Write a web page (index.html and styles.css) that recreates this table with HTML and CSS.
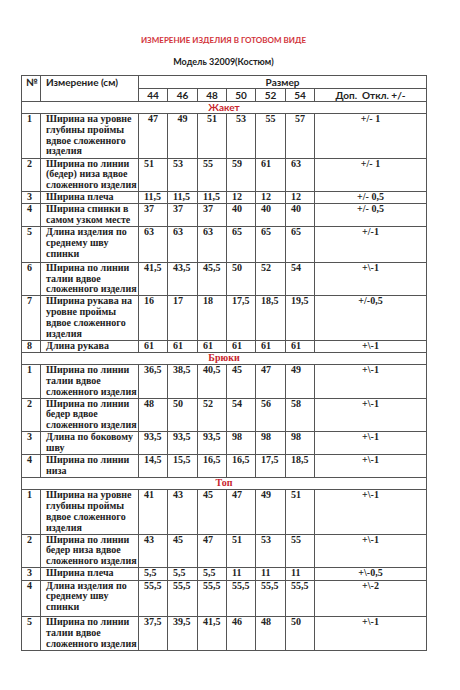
FILE: index.html
```html
<!DOCTYPE html>
<html>
<head>
<meta charset="utf-8">
<link rel="stylesheet" href="styles.css">
</head>
<body>
<div class="sheet">
  <div class="title">ИЗМЕРЕНИЕ ИЗДЕЛИЯ В ГОТОВОМ ВИДЕ</div>
  <div class="subtitle">Модель 32009(Костюм)</div>
  <table class="grid">
    <colgroup>
      <col class="c-num"><col class="c-name">
      <col class="c-a"><col class="c-b"><col class="c-a"><col class="c-a"><col class="c-b"><col class="c-a">
      <col class="c-tol">
    </colgroup>
    <thead>
      <tr class="hrow">
        <th rowspan="2" class="h-left">№</th>
        <th rowspan="2" class="h-left h-name">Измерение (см)</th>
        <th colspan="7" class="h-center">Размер</th>
      </tr>
      <tr class="hrow">
        <th class="h-center">44</th><th class="h-center">46</th><th class="h-center">48</th>
        <th class="h-center">50</th><th class="h-center">52</th><th class="h-center">54</th>
        <th class="h-center">Доп.&nbsp; Откл. +/-</th>
      </tr>
    </thead>
    <tbody>
      <tr class="section"><td colspan="9" class="sec-sans">Жакет</td></tr>
      <tr class="centered">
        <td>1</td><td>Ширина на уровне<br>глубины проймы<br>вдвое сложенного<br>изделия</td>
        <td>47</td><td>49</td><td>51</td><td>53</td><td>55</td><td>57</td><td class="tol">+/- 1</td>
      </tr>
      <tr>
        <td>2</td><td>Ширина по линии<br>(бедер) низа вдвое<br>сложенного изделия</td>
        <td>51</td><td>53</td><td>55</td><td>59</td><td>61</td><td>63</td><td class="tol">+/- 1</td>
      </tr>
      <tr>
        <td>3</td><td>Ширина плеча</td>
        <td>11,5</td><td>11,5</td><td>11,5</td><td>12</td><td>12</td><td>12</td><td class="tol">+/- 0,5</td>
      </tr>
      <tr>
        <td>4</td><td>Ширина спинки в<br>самом узком месте</td>
        <td>37</td><td>37</td><td>37</td><td>40</td><td>40</td><td>40</td><td class="tol">+/- 0,5</td>
      </tr>
      <tr class="tall2">
        <td>5</td><td>Длина изделия по<br>среднему шву<br>спинки</td>
        <td>63</td><td>63</td><td>63</td><td>65</td><td>65</td><td>65</td><td class="tol">+/-1</td>
      </tr>
      <tr>
        <td>6</td><td>Ширина по линии<br>талии вдвое<br>сложенного изделия</td>
        <td>41,5</td><td>43,5</td><td>45,5</td><td>50</td><td>52</td><td>54</td><td class="tol">+\-1</td>
      </tr>
      <tr>
        <td>7</td><td>Ширина рукава на<br>уровне проймы<br>вдвое сложенного<br>изделия</td>
        <td>16</td><td>17</td><td>18</td><td>17,5</td><td>18,5</td><td>19,5</td><td class="tol">+/-0,5</td>
      </tr>
      <tr>
        <td>8</td><td>Длина рукава</td>
        <td>61</td><td>61</td><td>61</td><td>61</td><td>61</td><td>61</td><td class="tol">+\-1</td>
      </tr>

      <tr class="section"><td colspan="9">Брюки</td></tr>
      <tr>
        <td>1</td><td>Ширина по линии<br>талии вдвое<br>сложенного изделия</td>
        <td>36,5</td><td>38,5</td><td>40,5</td><td>45</td><td>47</td><td>49</td><td class="tol">+\-1</td>
      </tr>
      <tr>
        <td>2</td><td>Ширина по линии<br>бедер вдвое<br>сложенного изделия</td>
        <td>48</td><td>50</td><td>52</td><td>54</td><td>56</td><td>58</td><td class="tol">+\-1</td>
      </tr>
      <tr>
        <td>3</td><td>Длина по боковому<br>шву</td>
        <td>93,5</td><td>93,5</td><td>93,5</td><td>98</td><td>98</td><td>98</td><td class="tol">+\-1</td>
      </tr>
      <tr>
        <td>4</td><td>Ширина по линии<br>низа</td>
        <td>14,5</td><td>15,5</td><td>16,5</td><td>16,5</td><td>17,5</td><td>18,5</td><td class="tol">+\-1</td>
      </tr>

      <tr class="section"><td colspan="9">Топ</td></tr>
      <tr>
        <td>1</td><td>Ширина на уровне<br>глубины проймы<br>вдвое сложенного<br>изделия</td>
        <td>41</td><td>43</td><td>45</td><td>47</td><td>49</td><td>51</td><td class="tol">+\-1</td>
      </tr>
      <tr>
        <td>2</td><td>Ширина по линии<br>бедер низа вдвое<br>сложенного изделия</td>
        <td>43</td><td>45</td><td>47</td><td>51</td><td>53</td><td>55</td><td class="tol">+\-1</td>
      </tr>
      <tr>
        <td>3</td><td>Ширина плеча</td>
        <td>5,5</td><td>5,5</td><td>5,5</td><td>11</td><td>11</td><td>11</td><td class="tol">+\-0,5</td>
      </tr>
      <tr class="tall3">
        <td>4</td><td>Длина изделия по<br>среднему шву<br>спинки</td>
        <td>55,5</td><td>55,5</td><td>55,5</td><td>55,5</td><td>55,5</td><td>55,5</td><td class="tol">+\-2</td>
      </tr>
      <tr>
        <td>5</td><td>Ширина по линии<br>талии вдвое<br>сложенного изделия</td>
        <td>37,5</td><td>39,5</td><td>41,5</td><td>46</td><td>48</td><td>50</td><td class="tol">+\-1</td>
      </tr>
    </tbody>
  </table>
</div>
</body>
</html>
```

FILE: styles.css
```css
html, body {
  margin: 0;
  padding: 0;
  background: #ffffff;
}

.sheet {
  width: 405px;
  margin-left: 21px;
  padding-top: 35px;
}

.title {
  text-align: center;
  font-family: Lato, "Liberation Sans", sans-serif;
  font-weight: 700;
  font-size: 8px;
  line-height: 11px;
  color: #d2343c;
}

.subtitle {
  text-align: center;
  font-family: Lato, "Liberation Sans", sans-serif;
  font-weight: 700;
  font-size: 9px;
  line-height: 11px;
  color: #222;
  margin-top: 10px;
  margin-bottom: 8px;
}

.grid {
  width: 405px;
  table-layout: fixed;
  border-collapse: collapse;
  border: 1px solid #555;
}

.c-num { width: 19px; }
.c-name { width: 98px; }
.c-a { width: 29px; }
.c-b { width: 30px; }
.c-tol { width: 112px; }

.grid th {
  border: 1px solid #555;
  font-family: Lato, "Liberation Sans", sans-serif;
  font-weight: 700;
  font-size: 10px;
  line-height: 12px;
  color: #222;
  padding: 0;
  height: 12px;
  box-sizing: border-box;
}

.hrow { height: 13px; }

.h-left {
  text-align: left;
  vertical-align: top;
  padding-left: 4px !important;
}

.h-name { padding-left: 5px !important; }

.h-center {
  text-align: center;
  vertical-align: middle;
}

.grid td {
  border: 1px solid #555;
  font-family: "Liberation Serif", "Times New Roman", serif;
  font-weight: 700;
  font-size: 10px;
  line-height: 10.7px;
  color: #222;
  vertical-align: top;
  text-align: left;
  padding: 0 0 0.5px 5px;
  white-space: nowrap;
  overflow: hidden;
}

.grid td.tol {
  text-align: center;
  padding-left: 0;
}

.centered td {
  text-align: center;
  padding-left: 0;
}

.centered td:first-child,
.centered td:nth-child(2) {
  text-align: left;
  padding-left: 5px;
}

.tall2 td { padding-bottom: 2.5px; }
.tall3 td { padding-bottom: 3.5px; }

.section td {
  text-align: center;
  color: #c8252d;
  padding: 0 0 0.5px 0;
  font-size: 10px;
}

.section td.sec-sans {
  font-family: Lato, "Liberation Sans", sans-serif;
}
```
